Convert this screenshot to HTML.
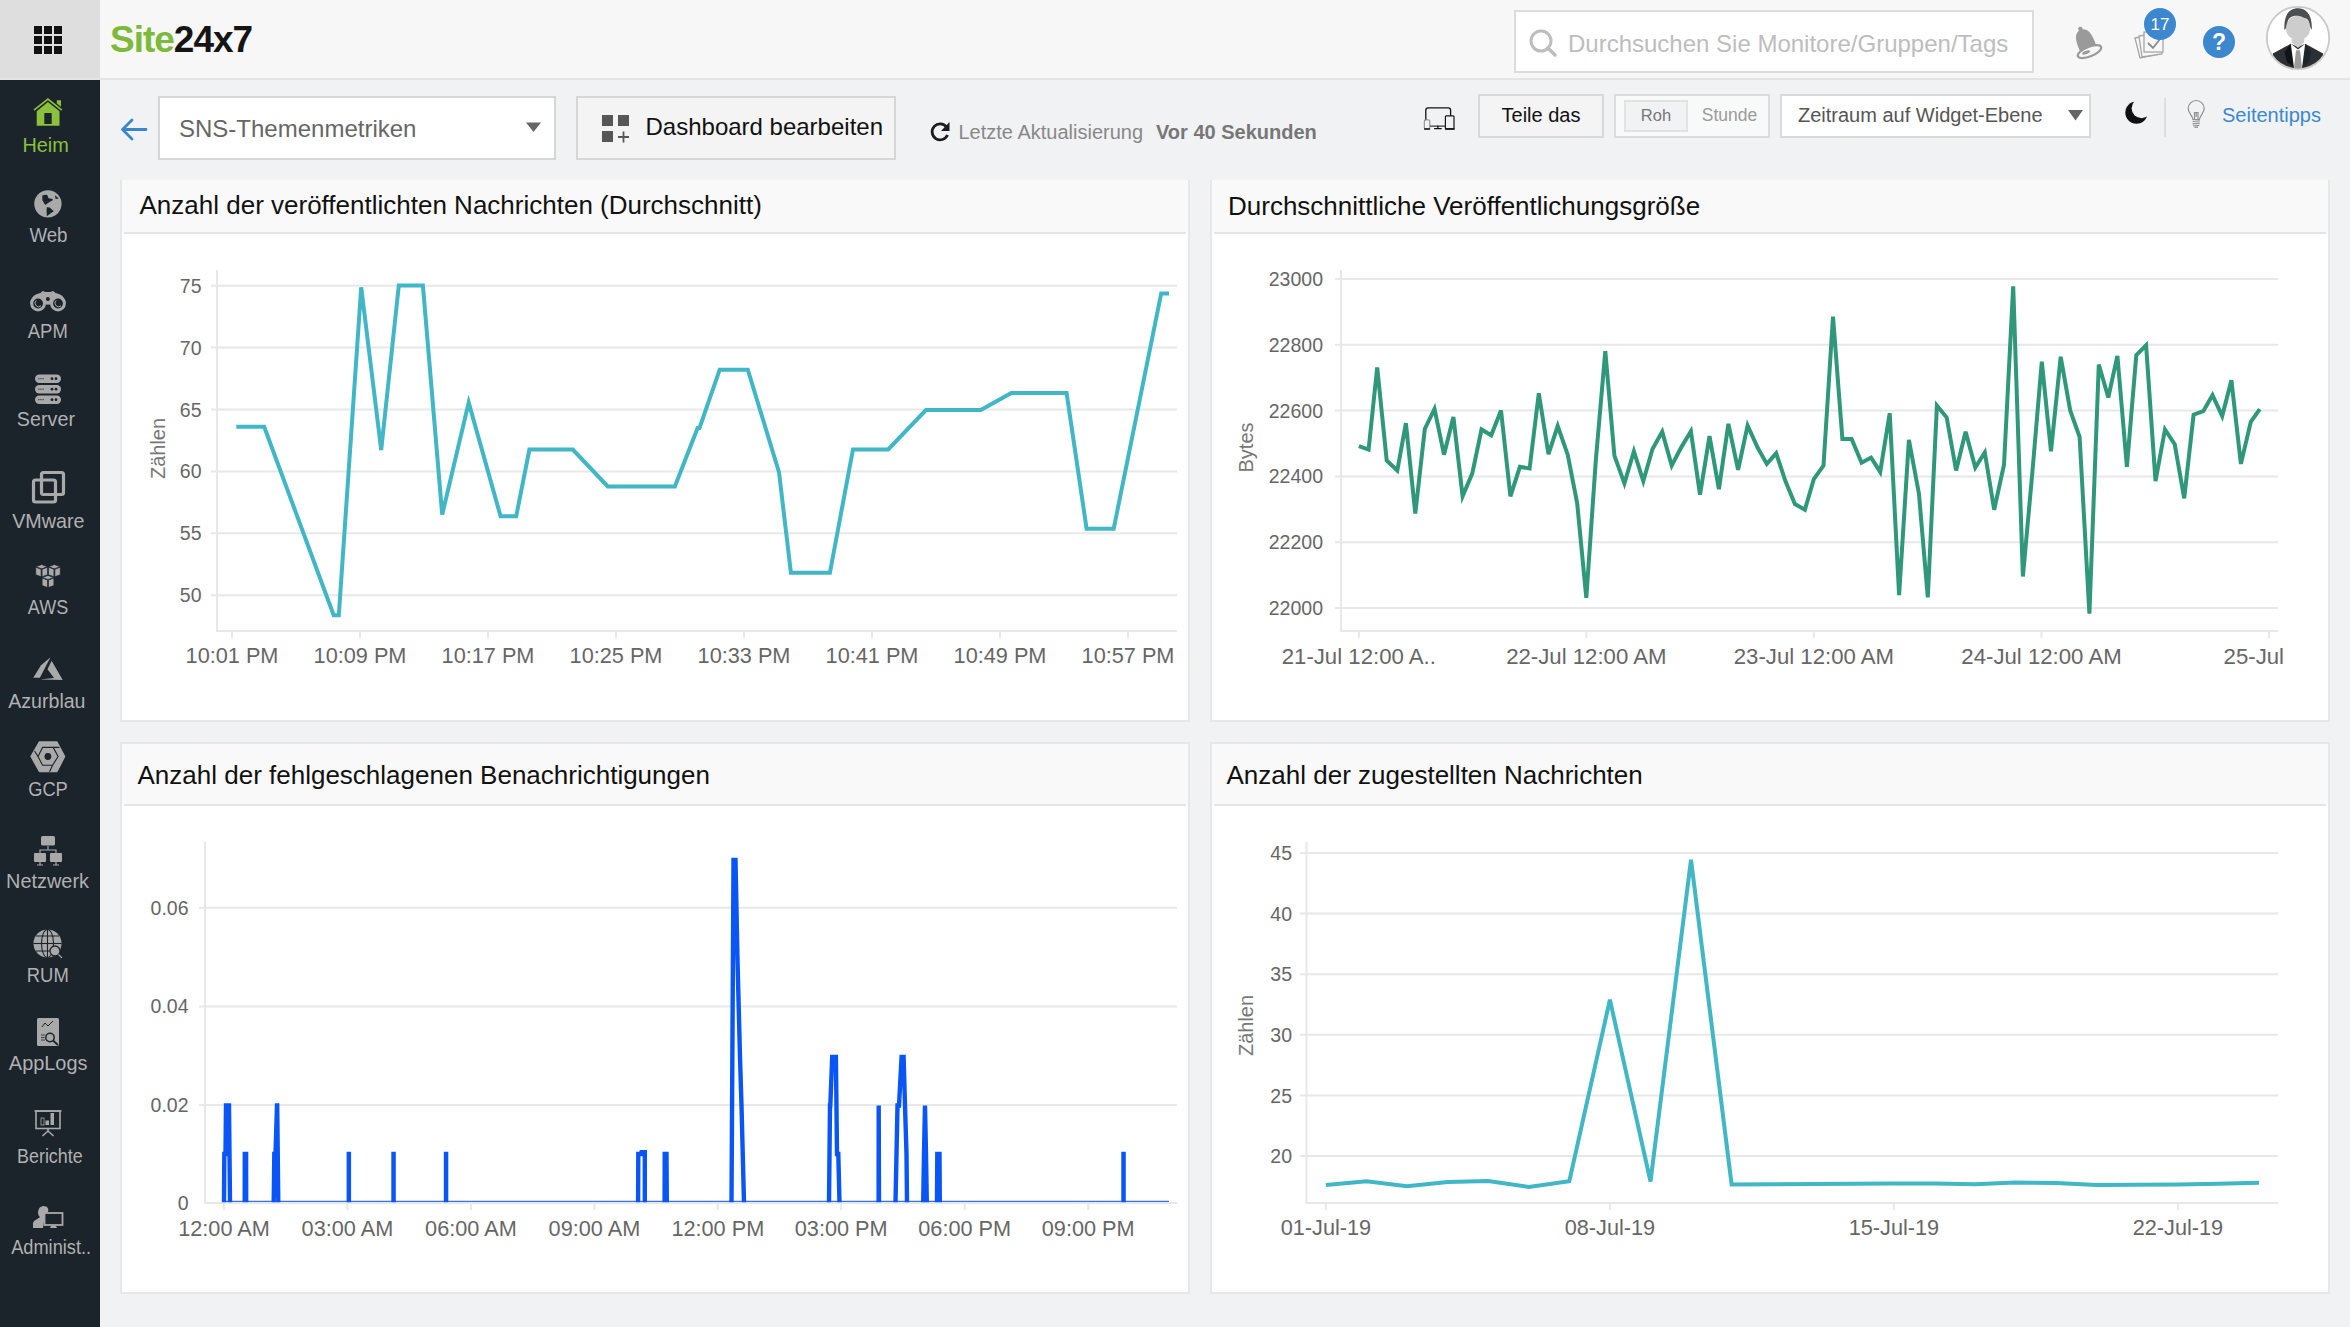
<!DOCTYPE html>
<html><head><meta charset="utf-8"><title>Site24x7 - SNS-Themenmetriken</title>
<style>
html,body{margin:0;padding:0;}
body{width:2350px;height:1327px;position:relative;overflow:hidden;background:#f1f2f4;font-family:'Liberation Sans', sans-serif;}
svg text{font-family:'Liberation Sans', sans-serif;}
</style></head><body>
<div style="position:absolute;left:0px;top:0px;width:2350px;height:78px;box-sizing:border-box;background:#f7f7f7"></div><div style="position:absolute;left:0px;top:78px;width:2350px;height:2px;box-sizing:border-box;background:#e4e4e4"></div><div style="position:absolute;left:0px;top:0px;width:100px;height:78px;box-sizing:border-box;background:#dedede"></div><div style="position:absolute;left:0px;top:80px;width:100px;height:1247px;box-sizing:border-box;background:#1b232b"></div><div style="position:absolute;left:1514px;top:10px;width:520px;height:63px;box-sizing:border-box;background:#fff;border:2px solid #dcdcdc"></div><div style="position:absolute;left:158px;top:96px;width:398px;height:64px;box-sizing:border-box;background:#fff;border:2px solid #d6d6d6"></div><div style="position:absolute;left:576px;top:96px;width:320px;height:64px;box-sizing:border-box;background:#f4f4f4;border:2px solid #d6d6d6"></div><div style="position:absolute;left:1478px;top:94px;width:126px;height:44px;box-sizing:border-box;background:#f4f4f4;border:2px solid #d9d9d9"></div><div style="position:absolute;left:1614px;top:94px;width:156px;height:44px;box-sizing:border-box;background:#f8f9f9;border:2px solid #dcdcdc"></div><div style="position:absolute;left:1624px;top:100px;width:64px;height:32px;box-sizing:border-box;background:#f1f2f4;border:2px solid #e2e2e2"></div><div style="position:absolute;left:1780px;top:94px;width:311px;height:44px;box-sizing:border-box;background:#fff;border:2px solid #d9d9d9"></div><div style="position:absolute;left:2164px;top:98px;width:2px;height:39px;box-sizing:border-box;background:#dedede"></div><div style="position:absolute;left:120px;top:180px;width:1070px;height:542px;box-sizing:border-box;background:#fff;border:2px solid #e7e7e7;border-top-width:0"></div><div style="position:absolute;left:1210px;top:180px;width:1120px;height:542px;box-sizing:border-box;background:#fff;border:2px solid #e7e7e7;border-top-width:0"></div><div style="position:absolute;left:120px;top:742px;width:1070px;height:552px;box-sizing:border-box;background:#fff;border:2px solid #e7e7e7;border-top-width:2px"></div><div style="position:absolute;left:1210px;top:742px;width:1120px;height:552px;box-sizing:border-box;background:#fff;border:2px solid #e7e7e7;border-top-width:2px"></div><div style="position:absolute;left:122px;top:180px;width:1066px;height:52px;box-sizing:border-box;background:#f9f9f9"></div><div style="position:absolute;left:124px;top:232px;width:1062px;height:2px;box-sizing:border-box;background:#e5e5e5"></div><div style="position:absolute;left:1212px;top:180px;width:1116px;height:52px;box-sizing:border-box;background:#f9f9f9"></div><div style="position:absolute;left:1214px;top:232px;width:1112px;height:2px;box-sizing:border-box;background:#e5e5e5"></div><div style="position:absolute;left:122px;top:744px;width:1066px;height:60px;box-sizing:border-box;background:#f9f9f9"></div><div style="position:absolute;left:124px;top:804px;width:1062px;height:2px;box-sizing:border-box;background:#e5e5e5"></div><div style="position:absolute;left:1212px;top:744px;width:1116px;height:60px;box-sizing:border-box;background:#f9f9f9"></div><div style="position:absolute;left:1214px;top:804px;width:1112px;height:2px;box-sizing:border-box;background:#e5e5e5"></div>
<svg width="2350" height="1327" viewBox="0 0 2350 1327" style="position:absolute;left:0;top:0">
<rect x="34" y="26" width="8" height="8" fill="#111"/><rect x="34" y="36" width="8" height="8" fill="#111"/><rect x="34" y="46" width="8" height="8" fill="#111"/><rect x="44" y="26" width="8" height="8" fill="#111"/><rect x="44" y="36" width="8" height="8" fill="#111"/><rect x="44" y="46" width="8" height="8" fill="#111"/><rect x="54" y="26" width="8" height="8" fill="#111"/><rect x="54" y="36" width="8" height="8" fill="#111"/><rect x="54" y="46" width="8" height="8" fill="#111"/><text x="110" y="52" font-size="37" font-weight="700" letter-spacing="-1" fill="#7dba3c">Site<tspan fill="#151515">24x7</tspan></text><circle cx="1541" cy="41" r="10" fill="none" stroke="#bdbdbd" stroke-width="3"/><line x1="1548" y1="48" x2="1555" y2="55" stroke="#bdbdbd" stroke-width="3.5" stroke-linecap="round"/><text x="1568.0" y="52.0" font-size="24" fill="#bdbdbd" text-anchor="start" font-weight="400" >Durchsuchen Sie Monitore/Gruppen/Tags</text><g transform="translate(2085,40.5) rotate(-22)"><circle cx="0" cy="-12.5" r="2.2" fill="#9a9a9a"/><path d="M-8.5,10 C-9,0 -9,-11 0,-11.5 C9,-11 9,0 8.5,10 L12,12 L-12,12 Z" fill="#9a9a9a"/><ellipse cx="0" cy="12" rx="12.5" ry="4.8" fill="#f7f7f7" stroke="#9a9a9a" stroke-width="2.2"/><ellipse cx="-3.5" cy="11.5" rx="4.2" ry="1.6" fill="#9a9a9a"/></g><g fill="none" stroke="#a6a6a6" stroke-width="1.3"><path d="M2135,38 L2156,34 L2160,54 L2140,58 Z" fill="#f7f7f7"/><path d="M2139,36 L2159,33 L2162,54 L2142,57 Z" fill="#f7f7f7"/><rect x="2144" y="32" width="19" height="20" fill="#f7f7f7"/><path d="M2148,43 L2153,48 L2160,39" stroke="#8a8a8a" stroke-width="1.8"/></g><circle cx="2160" cy="24" r="16" fill="#3d87cf"/><text x="2160.0" y="30.0" font-size="17" fill="#fff" text-anchor="middle" font-weight="400" >17</text><circle cx="2219" cy="42" r="16" fill="#3d87cf"/><text x="2219.0" y="50.0" font-size="23" fill="#fff" text-anchor="middle" font-weight="700" >?</text><circle cx="2298" cy="38" r="31.2" fill="#fff" stroke="#c9c9c9" stroke-width="1.8"/><clipPath id="av"><circle cx="2298" cy="38" r="30.3"/></clipPath><g clip-path="url(#av)"><path d="M2270,75 L2272.9,53.5 L2290.8,43.8 L2298,47 L2305.2,43.8 L2323.1,53.5 L2326,75 Z" fill="#2c3034"/><path d="M2290.8,43.8 L2294.5,68 L2287,62 L2284.5,52 Z" fill="#111314"/><path d="M2305.2,43.8 L2301.5,68 L2309,62 L2311.5,52 Z" fill="#1e252c"/><path d="M2290.8,43.8 L2298,49.5 L2305.2,43.8 L2302,68 L2294,68 Z" fill="#fff"/><path d="M2296,50.2 L2300,50.2 L2302,68 L2294,68 Z" fill="#9b9b9b"/><path d="M2291.5,39 L2304.5,39 L2304,42.5 L2298,48 L2292,42.5 Z" fill="#cdcdcd"/><ellipse cx="2298.1" cy="28" rx="12.2" ry="12.3" fill="#cdcdcd"/><path d="M2284.4,30 C2283.5,14 2290,8.2 2298,8.2 C2306,8.2 2312.5,14 2311.8,30 L2310.3,27 C2309.5,21 2307.5,18.5 2305.5,18.2 C2302.5,17.3 2300,15.8 2297.5,15.8 C2292,15.8 2289,17.5 2287.6,21.5 C2286.6,24 2286,27 2285.8,28.5 Z" fill="#4b4e53"/></g><g transform="matrix(0.9956,0,0,1,-2.18,0)"><text x="48.0" y="152.2" font-size="20" fill="#8bc13c" text-anchor="middle" font-weight="400" >Heim</text></g><g transform="matrix(0.9366,0,0,1,3.51,0)"><text x="48.0" y="241.8" font-size="20" fill="#b1b1b1" text-anchor="middle" font-weight="400" >Web</text></g><g transform="matrix(0.9233,0,0,1,3.50,0)"><text x="48.0" y="338.1" font-size="20" fill="#b1b1b1" text-anchor="middle" font-weight="400" >APM</text></g><g transform="matrix(0.9864,0,0,1,-1.44,0)"><text x="48.0" y="426.5" font-size="20" fill="#b1b1b1" text-anchor="middle" font-weight="400" >Server</text></g><g transform="matrix(0.9877,0,0,1,0.94,0)"><text x="48.0" y="527.7" font-size="20" fill="#b1b1b1" text-anchor="middle" font-weight="400" >VMware</text></g><g transform="matrix(0.9022,0,0,1,4.74,0)"><text x="48.0" y="613.8" font-size="20" fill="#b1b1b1" text-anchor="middle" font-weight="400" >AWS</text></g><g transform="matrix(0.9797,0,0,1,-0.14,0)"><text x="48.0" y="708.5" font-size="20" fill="#b1b1b1" text-anchor="middle" font-weight="400" >Azurblau</text></g><g transform="matrix(0.9143,0,0,1,4.11,0)"><text x="48.0" y="795.6" font-size="20" fill="#b1b1b1" text-anchor="middle" font-weight="400" >GCP</text></g><g transform="matrix(0.9964,0,0,1,-0.27,0)"><text x="48.0" y="888.1" font-size="20" fill="#b1b1b1" text-anchor="middle" font-weight="400" >Netzwerk</text></g><g transform="matrix(0.9227,0,0,1,3.51,0)"><text x="48.0" y="981.6" font-size="20" fill="#b1b1b1" text-anchor="middle" font-weight="400" >RUM</text></g><g transform="matrix(0.9962,0,0,1,0.33,0)"><text x="48.0" y="1070.4" font-size="20" fill="#b1b1b1" text-anchor="middle" font-weight="400" >AppLogs</text></g><g transform="matrix(0.8931,0,0,1,6.98,0)"><text x="48.0" y="1163.3" font-size="20" fill="#b1b1b1" text-anchor="middle" font-weight="400" >Berichte</text></g><g transform="matrix(0.9105,0,0,1,7.45,0)"><text x="48.0" y="1253.6" font-size="20" fill="#b1b1b1" text-anchor="middle" font-weight="400" >Administ..</text></g><g fill="#8bc13c"><path d="M34,110.1 L47.9,99.2 L61.8,110.1" fill="none" stroke="#8bc13c" stroke-width="1.7"/><path d="M56.8,100.3 L61,100.3 L61,106.8 L56.8,103.6 Z"/><path d="M36.7,111.3 L47.9,102 L59.5,111.3 L59.5,125.8 L36.7,125.8 Z"/><rect x="44.3" y="113.1" width="7.4" height="11" rx="0.6" fill="#1b232b"/></g><circle cx="47.9" cy="203.85" r="13.7" fill="#a9a9a9"/><path d="M42.3,195.6 C44,194.8 46,194.6 47.2,195 L48.6,198.2 L52.4,199 L53,200.1 L49.2,202.3 L47.2,203.4 L45.6,205 L44.3,203.4 L42.4,200.3 Z" fill="#1b232b"/><path d="M55,195.2 L58.7,198.6 L55.6,199 Z" fill="#1b232b"/><path d="M46.8,207.3 L49.7,207.4 L53.8,211.2 L51.1,213.1 L46.8,216.3 L46.6,210.6 Z" fill="#1b232b"/><g fill="#a9a9a9"><circle cx="38.05" cy="303.5" r="7.9"/><circle cx="58" cy="303.5" r="7.9"/><path d="M30.4,303 C30.5,297.5 35,293.8 40.5,293 L42.5,290.9 L45.5,292 L50.3,292 L53.3,290.9 L55.5,293 C61,293.8 65.5,297.5 65.6,303 Z"/><rect x="44" y="292" width="8" height="12.6"/></g><circle cx="38.05" cy="303.5" r="4.9" fill="#1b232b"/><circle cx="58" cy="303.5" r="4.9" fill="#1b232b"/><circle cx="47.9" cy="299.1" r="2" fill="#1b232b"/><path d="M36.2,300.6 A3.3,3.3 0 0 0 41,305.8" stroke="#a9a9a9" stroke-width="1" fill="none"/><path d="M56.15,300.6 A3.3,3.3 0 0 0 60.95,305.8" stroke="#a9a9a9" stroke-width="1" fill="none"/><rect x="35" y="374.5" width="26" height="8.5" rx="4.2" fill="#a9a9a9"/><circle cx="52" cy="378.7" r="1.4" fill="#1b232b"/><circle cx="56" cy="378.7" r="1.4" fill="#1b232b"/><line x1="38" y1="378.7" x2="44" y2="378.7" stroke="#1b232b" stroke-width="0.8" stroke-dasharray="1.5,0.7"/><rect x="35" y="385.0" width="26" height="8.5" rx="4.2" fill="#a9a9a9"/><circle cx="52" cy="389.2" r="1.4" fill="#1b232b"/><circle cx="56" cy="389.2" r="1.4" fill="#1b232b"/><line x1="38" y1="389.2" x2="44" y2="389.2" stroke="#1b232b" stroke-width="0.8" stroke-dasharray="1.5,0.7"/><rect x="35" y="395.5" width="26" height="8.5" rx="4.2" fill="#a9a9a9"/><circle cx="52" cy="399.7" r="1.4" fill="#1b232b"/><circle cx="56" cy="399.7" r="1.4" fill="#1b232b"/><line x1="38" y1="399.7" x2="44" y2="399.7" stroke="#1b232b" stroke-width="0.8" stroke-dasharray="1.5,0.7"/><g fill="none" stroke="#a9a9a9" stroke-width="3.2"><rect x="41.5" y="472.5" width="22" height="22" rx="2"/><rect x="33.5" y="480" width="22" height="22" rx="2"/></g><g stroke="#1b232b" stroke-width="0.7" stroke-linejoin="round"><path d="M35.7,566.7 L41.6,564.6 L47.5,566.7 L41.6,568.8000000000001 Z" fill="#a9a9a9"/><path d="M35.7,567.2 L41.15,569.3000000000001 L41.15,576.8000000000001 L35.7,574.7 Z" fill="#a9a9a9"/><path d="M47.5,567.2 L42.050000000000004,569.3000000000001 L42.050000000000004,576.8000000000001 L47.5,574.7 Z" fill="#a9a9a9"/></g><g stroke="#1b232b" stroke-width="0.7" stroke-linejoin="round"><path d="M48.5,566.7 L54.4,564.6 L60.3,566.7 L54.4,568.8000000000001 Z" fill="#a9a9a9"/><path d="M48.5,567.2 L53.949999999999996,569.3000000000001 L53.949999999999996,576.8000000000001 L48.5,574.7 Z" fill="#a9a9a9"/><path d="M60.3,567.2 L54.85,569.3000000000001 L54.85,576.8000000000001 L60.3,574.7 Z" fill="#a9a9a9"/></g><g stroke="#1b232b" stroke-width="0.7" stroke-linejoin="round"><path d="M42.1,577.5 L48,575.4 L53.9,577.5 L48,579.6 Z" fill="#a9a9a9"/><path d="M42.1,578.0 L47.55,580.1 L47.55,587.6 L42.1,585.5 Z" fill="#a9a9a9"/><path d="M53.9,578.0 L48.45,580.1 L48.45,587.6 L53.9,585.5 Z" fill="#a9a9a9"/></g><path d="M50.5,657.2 L41,665.2 L33.3,677.7 L39.9,677.7 Z" fill="#a9a9a9"/><path d="M51.6,660.7 L62.7,679.9 L41.3,679.6 L41.3,679.2 L54,678 L47.5,669.3 Z" fill="#a9a9a9"/><path d="M39.5,742 L56.9,742 L64.6,756.5 L56.9,771.5 L39.5,771.5 L31.1,756.5 Z" fill="#a9a9a9" stroke="#a9a9a9" stroke-width="1.5" stroke-linejoin="round"/><path d="M42.6,747.4 L53.2,747.4 L58.1,756.5 L52.6,765.2 L42.6,765.2 L38,756.5 Z" fill="#a9a9a9" stroke="#1b232b" stroke-width="1.1"/><circle cx="47.9" cy="756.5" r="3.4" fill="#1b232b"/><path d="M34.5,751 L38,756.5 M53.2,747.4 L59.5,747.4 M52.6,765.2 L49.5,771.8" stroke="#1b232b" stroke-width="1.1" fill="none"/><g fill="#a9a9a9"><rect x="41" y="836" width="14" height="9.5" rx="1.5"/><rect x="34" y="853" width="12" height="9" rx="1"/><rect x="50" y="853" width="12" height="9" rx="1"/></g><path d="M48,846 L48,850 M40,853 L40,850 L56,850 L56,853 M40,862 L40,865 M56,862 L56,865 M37,865 L43,865 M53,865 L59,865" stroke="#a9a9a9" stroke-width="1.2" fill="none"/><circle cx="47.5" cy="943.5" r="14" fill="#a9a9a9"/><g stroke="#1b232b" stroke-width="1.1" fill="none"><ellipse cx="47.5" cy="943.5" rx="6" ry="14"/><line x1="47.5" y1="929.5" x2="47.5" y2="957.5"/><line x1="33.5" y1="943.5" x2="61.5" y2="943.5"/><path d="M36,936 L59,936 M36,951 L59,951"/></g><circle cx="55" cy="951" r="5" fill="#a9a9a9" stroke="#1b232b" stroke-width="1.3"/><line x1="58.5" y1="954.5" x2="62" y2="958" stroke="#1b232b" stroke-width="2.4"/><line x1="58.5" y1="954.5" x2="62" y2="958" stroke="#a9a9a9" stroke-width="1.1"/><rect x="37" y="1018" width="22" height="28" rx="1.5" fill="#a9a9a9"/><path d="M42,1027 L45,1023 L48,1026 L53,1021" stroke="#1b232b" stroke-width="1" fill="none"/><circle cx="50" cy="1037.5" r="4.2" fill="none" stroke="#1b232b" stroke-width="1.5"/><line x1="53" y1="1040.5" x2="58" y2="1045" stroke="#1b232b" stroke-width="1.8"/><path d="M41,1035 L45,1035 M41,1037.5 L44.5,1037.5 M41,1040 L45,1040" stroke="#1b232b" stroke-width="0.8"/><path d="M34.5,1111 L61.5,1111" stroke="#a9a9a9" stroke-width="1.6"/><rect x="36" y="1111" width="24" height="17.5" fill="none" stroke="#a9a9a9" stroke-width="1.6"/><g fill="#a9a9a9"><rect x="41" y="1118" width="3" height="7" fill="none" stroke="#a9a9a9" stroke-width="0.8"/><rect x="45.5" y="1120.5" width="3.5" height="4.5"/><rect x="50.5" y="1113" width="3.5" height="12"/></g><path d="M48,1129 L48,1132 M42.5,1136 L48,1131 L53.5,1136" stroke="#a9a9a9" stroke-width="1.6" fill="none"/><path d="M33,1228 L33,1223 C34,1220 38,1219 40,1217 C37,1215 37,1207 43,1206 C48,1206 49,1209 48,1212 L45,1214 L43,1228 Z" fill="#a9a9a9"/><rect x="44.5" y="1213" width="18" height="12" fill="#1b232b" stroke="#a9a9a9" stroke-width="1.8"/><path d="M51,1226 L56,1226 L57,1228 L50,1228 Z" fill="#a9a9a9"/><path d="M146,129.5 L123,129.5 M132,120 L122.5,129.5 L132,139" stroke="#3b85cc" stroke-width="2.8" fill="none" stroke-linecap="round" stroke-linejoin="round"/><text x="179.0" y="137.0" font-size="24" fill="#666" text-anchor="start" font-weight="400" >SNS-Themenmetriken</text><path d="M526,122.5 L541,122.5 L533.5,132 Z" fill="#666"/><g fill="#575757"><rect x="602" y="115" width="11" height="11"/><rect x="618" y="115" width="11" height="11"/><rect x="602" y="131" width="11" height="11"/></g><path d="M623.5,131.5 L623.5,142.5 M618,137 L629,137" stroke="#575757" stroke-width="1.8"/><text x="645.5" y="134.5" font-size="24" fill="#111" text-anchor="start" font-weight="400" >Dashboard bearbeiten</text><path d="M946.5,127 A8,8 0 1 0 947.5,135" stroke="#1c1c1c" stroke-width="2.8" fill="none"/><path d="M949.5,122 L949.5,131 L941,131 Z" fill="#1c1c1c"/><text x="958.5" y="138.5" font-size="20" fill="#888" text-anchor="start" font-weight="400" >Letzte Aktualisierung</text><text x="1156.0" y="138.5" font-size="20" fill="#777" text-anchor="start" font-weight="700" >Vor 40 Sekunden</text><g fill="none" stroke-linecap="round"><path d="M1425.8,119.4 L1425.8,110.2 Q1425.8,107.8 1428.2,107.8 L1448.2,107.8 Q1450.6,107.8 1450.6,110.2 L1450.6,115.3" stroke="#111" stroke-width="1.3"/><path d="M1430.4,126.2 L1444.6,126.2" stroke="#3a3a3a" stroke-width="1.3"/><path d="M1437.9,126.2 L1437.9,128.4 M1434.6,128.7 L1441.2,128.7" stroke="#111" stroke-width="1.3"/><rect x="1424.3" y="119.9" width="5.5" height="9" rx="0.9" stroke="#777" stroke-width="0.9"/><path d="M1424.6,129 L1429.6,129" stroke="#111" stroke-width="1.3"/><rect x="1445.4" y="115.9" width="8.6" height="13" rx="0.9" stroke="#151515" stroke-width="1.2"/><path d="M1445.6,128.9 L1454.2,128.9" stroke="#111" stroke-width="1.5"/></g><text x="1541.0" y="122.3" font-size="20" fill="#111" text-anchor="middle" font-weight="400" >Teile das</text><text x="1656.0" y="121.0" font-size="16.5" fill="#777" text-anchor="middle" font-weight="400" >Roh</text><text x="1729.5" y="121.0" font-size="17.5" fill="#9b9b9b" text-anchor="middle" font-weight="400" >Stunde</text><text x="1798.0" y="122.3" font-size="20" fill="#555" text-anchor="start" font-weight="400" >Zeitraum auf Widget-Ebene</text><path d="M2068,110 L2083,110 L2075.5,120.5 Z" fill="#666"/><circle cx="2136.5" cy="112.6" r="11.2" fill="#111"/><circle cx="2141.6" cy="108.2" r="10" fill="#f1f2f4"/><g fill="none" stroke="#8f8f8f" stroke-width="1.2"><path d="M2193,119.5 C2192.5,115.5 2188.2,113 2188.2,108.5 A8,8 0 0 1 2204.2,108.5 C2204.2,113 2199.9,115.5 2199.4,119.5 Z"/><path d="M2194.5,119 L2194.5,112.5 L2198,112.5 L2198,119 M2196.2,112.5 L2196.2,117"/><path d="M2192.5,121.5 L2199.8,120.8 M2192.5,123.8 L2199.8,123.1 M2193,126 L2199.3,125.4 M2194.5,127.5 L2198,127.2"/></g><text x="2222.0" y="122.3" font-size="20" fill="#3d87cf" text-anchor="start" font-weight="400" >Seitentipps</text><text x="139.5" y="214.3" font-size="26" fill="#111" text-anchor="start" font-weight="400" >Anzahl der veröffentlichten Nachrichten (Durchschnitt)</text><text x="1228.0" y="214.5" font-size="26" fill="#111" text-anchor="start" font-weight="400" >Durchschnittliche Veröffentlichungsgröße</text><text x="137.5" y="784.0" font-size="26" fill="#111" text-anchor="start" font-weight="400" >Anzahl der fehlgeschlagenen Benachrichtigungen</text><text x="1226.5" y="784.0" font-size="26" fill="#111" text-anchor="start" font-weight="400" >Anzahl der zugestellten Nachrichten</text><line x1="211" y1="285.7" x2="1177" y2="285.7" stroke="#e8e8e8" stroke-width="2"/><line x1="211" y1="347.6" x2="1177" y2="347.6" stroke="#e8e8e8" stroke-width="2"/><line x1="211" y1="409.5" x2="1177" y2="409.5" stroke="#e8e8e8" stroke-width="2"/><line x1="211" y1="471.4" x2="1177" y2="471.4" stroke="#e8e8e8" stroke-width="2"/><line x1="211" y1="533.3" x2="1177" y2="533.3" stroke="#e8e8e8" stroke-width="2"/><line x1="211" y1="595.2" x2="1177" y2="595.2" stroke="#e8e8e8" stroke-width="2"/><line x1="217" y1="270" x2="217" y2="632" stroke="#e8e8e8" stroke-width="2"/><line x1="216" y1="631" x2="1177" y2="631" stroke="#e8e8e8" stroke-width="2"/><line x1="232.0" y1="631" x2="232.0" y2="638" stroke="#e8e8e8" stroke-width="2"/><line x1="360.0" y1="631" x2="360.0" y2="638" stroke="#e8e8e8" stroke-width="2"/><line x1="488.0" y1="631" x2="488.0" y2="638" stroke="#e8e8e8" stroke-width="2"/><line x1="616.0" y1="631" x2="616.0" y2="638" stroke="#e8e8e8" stroke-width="2"/><line x1="744.0" y1="631" x2="744.0" y2="638" stroke="#e8e8e8" stroke-width="2"/><line x1="872.0" y1="631" x2="872.0" y2="638" stroke="#e8e8e8" stroke-width="2"/><line x1="1000.0" y1="631" x2="1000.0" y2="638" stroke="#e8e8e8" stroke-width="2"/><line x1="1128.0" y1="631" x2="1128.0" y2="638" stroke="#e8e8e8" stroke-width="2"/><text x="201.5" y="292.7" font-size="19.5" fill="#666" text-anchor="end" font-weight="400" >75</text><text x="201.5" y="354.6" font-size="19.5" fill="#666" text-anchor="end" font-weight="400" >70</text><text x="201.5" y="416.5" font-size="19.5" fill="#666" text-anchor="end" font-weight="400" >65</text><text x="201.5" y="478.4" font-size="19.5" fill="#666" text-anchor="end" font-weight="400" >60</text><text x="201.5" y="540.3" font-size="19.5" fill="#666" text-anchor="end" font-weight="400" >55</text><text x="201.5" y="602.2" font-size="19.5" fill="#666" text-anchor="end" font-weight="400" >50</text><text x="232.0" y="663.0" font-size="21.7" fill="#666" text-anchor="middle" font-weight="400" >10:01 PM</text><text x="360.0" y="663.0" font-size="21.7" fill="#666" text-anchor="middle" font-weight="400" >10:09 PM</text><text x="488.0" y="663.0" font-size="21.7" fill="#666" text-anchor="middle" font-weight="400" >10:17 PM</text><text x="616.0" y="663.0" font-size="21.7" fill="#666" text-anchor="middle" font-weight="400" >10:25 PM</text><text x="744.0" y="663.0" font-size="21.7" fill="#666" text-anchor="middle" font-weight="400" >10:33 PM</text><text x="872.0" y="663.0" font-size="21.7" fill="#666" text-anchor="middle" font-weight="400" >10:41 PM</text><text x="1000.0" y="663.0" font-size="21.7" fill="#666" text-anchor="middle" font-weight="400" >10:49 PM</text><text x="1128.0" y="663.0" font-size="21.7" fill="#666" text-anchor="middle" font-weight="400" >10:57 PM</text><text transform="translate(165,448.5) rotate(-90)" font-size="20" fill="#777" text-anchor="middle">Zählen</text><polyline points="236.3,426.7 264.2,426.7 333.7,615.3 338.8,615.3 361.2,287.3 381.2,450.1 398.8,285.6 422.9,285.6 442.2,514.6 468.7,402.6 500.6,516.3 516.2,516.3 529.4,449.5 572.8,449.5 607.8,486.4 674.9,486.4 697.6,428.0 699.5,428.0 719.7,369.7 747.8,369.7 779.0,472.1 790.9,572.8 829.9,572.8 853.0,449.4 888.2,449.4 925.9,410.0 980.8,410.0 1011.3,393.1 1066.6,393.1 1086.6,528.7 1113.7,528.7 1161.2,293.4 1169.0,293.4" fill="none" stroke="#41b6c5" stroke-width="4" stroke-linejoin="miter"/><line x1="1335" y1="279.0" x2="2278" y2="279.0" stroke="#e8e8e8" stroke-width="2"/><line x1="1335" y1="344.8" x2="2278" y2="344.8" stroke="#e8e8e8" stroke-width="2"/><line x1="1335" y1="410.6" x2="2278" y2="410.6" stroke="#e8e8e8" stroke-width="2"/><line x1="1335" y1="476.4" x2="2278" y2="476.4" stroke="#e8e8e8" stroke-width="2"/><line x1="1335" y1="542.2" x2="2278" y2="542.2" stroke="#e8e8e8" stroke-width="2"/><line x1="1335" y1="608.0" x2="2278" y2="608.0" stroke="#e8e8e8" stroke-width="2"/><line x1="1341" y1="270" x2="1341" y2="632" stroke="#e8e8e8" stroke-width="2"/><line x1="1340" y1="631" x2="2278" y2="631" stroke="#e8e8e8" stroke-width="2"/><line x1="1358.8" y1="631" x2="1358.8" y2="638" stroke="#e8e8e8" stroke-width="2"/><line x1="1586.3" y1="631" x2="1586.3" y2="638" stroke="#e8e8e8" stroke-width="2"/><line x1="1813.9" y1="631" x2="1813.9" y2="638" stroke="#e8e8e8" stroke-width="2"/><line x1="2041.5" y1="631" x2="2041.5" y2="638" stroke="#e8e8e8" stroke-width="2"/><line x1="2269.0" y1="631" x2="2269.0" y2="638" stroke="#e8e8e8" stroke-width="2"/><text x="1323.0" y="286.0" font-size="19.5" fill="#666" text-anchor="end" font-weight="400" >23000</text><text x="1323.0" y="351.8" font-size="19.5" fill="#666" text-anchor="end" font-weight="400" >22800</text><text x="1323.0" y="417.6" font-size="19.5" fill="#666" text-anchor="end" font-weight="400" >22600</text><text x="1323.0" y="483.4" font-size="19.5" fill="#666" text-anchor="end" font-weight="400" >22400</text><text x="1323.0" y="549.2" font-size="19.5" fill="#666" text-anchor="end" font-weight="400" >22200</text><text x="1323.0" y="615.0" font-size="19.5" fill="#666" text-anchor="end" font-weight="400" >22000</text><text x="1358.8" y="663.8" font-size="22.2" fill="#666" text-anchor="middle" font-weight="400" >21-Jul 12:00 A..</text><text x="1586.3" y="663.8" font-size="22.2" fill="#666" text-anchor="middle" font-weight="400" >22-Jul 12:00 AM</text><text x="1813.9" y="663.8" font-size="22.2" fill="#666" text-anchor="middle" font-weight="400" >23-Jul 12:00 AM</text><text x="2041.5" y="663.8" font-size="22.2" fill="#666" text-anchor="middle" font-weight="400" >24-Jul 12:00 AM</text><text x="2269.0" y="663.8" font-size="22.2" fill="#666" text-anchor="middle" font-weight="400" ></text><text x="2284.0" y="663.8" font-size="22.2" fill="#666" text-anchor="end" font-weight="400" >25-Jul</text><text transform="translate(1253,447.5) rotate(-90)" font-size="20" fill="#777" text-anchor="middle">Bytes</text><polyline points="1358.9,446.2 1368.6,449.6 1377.2,367.4 1386.7,460.5 1397.3,470.5 1405.9,423.2 1415.3,513.5 1424.8,429.0 1434.5,408.9 1444.0,454.7 1453.4,416.9 1462.6,496.3 1472.3,473.4 1481.5,429.5 1491.2,435.3 1501.0,410.4 1510.4,496.3 1519.9,466.8 1529.6,468.5 1538.8,393.2 1548.5,454.2 1557.7,426.1 1567.7,454.7 1577.2,503.4 1586.3,597.9 1595.8,460.5 1605.3,351.1 1614.4,455.6 1624.4,483.4 1633.9,451.3 1643.3,481.1 1652.5,449.0 1662.2,431.8 1671.7,465.6 1681.1,447.6 1690.9,431.3 1700.0,494.8 1709.5,436.1 1718.9,489.1 1728.4,423.8 1738.1,469.9 1747.6,425.5 1757.6,447.6 1766.8,463.9 1776.2,453.3 1785.4,481.1 1794.9,504.0 1804.9,509.7 1813.8,479.1 1823.5,465.6 1833.0,316.7 1842.4,439.0 1851.6,439.0 1861.6,462.8 1871.1,457.6 1880.2,471.9 1889.7,413.2 1899.1,595.1 1908.9,439.9 1918.9,493.4 1927.8,597.4 1936.9,405.5 1946.7,417.5 1956.1,470.5 1965.6,431.8 1975.3,467.6 1984.8,452.5 1994.2,509.7 2004.0,464.8 2013.2,286.3 2022.9,576.5 2032.4,471.9 2041.8,361.7 2051.0,451.3 2060.7,356.8 2070.2,410.4 2079.6,437.0 2089.4,613.7 2098.8,364.5 2108.3,397.5 2117.4,355.9 2126.9,466.8 2136.3,355.1 2146.1,345.3 2155.5,481.1 2165.0,429.5 2174.7,444.2 2184.2,498.3 2193.6,414.7 2203.3,411.2 2212.5,395.2 2222.2,416.1 2231.4,380.3 2240.9,463.9 2250.8,421.8 2259.8,409.2" fill="none" stroke="#2f977a" stroke-width="4" stroke-linejoin="miter"/><line x1="199" y1="907.8" x2="1177" y2="907.8" stroke="#e8e8e8" stroke-width="2"/><line x1="199" y1="1006.4" x2="1177" y2="1006.4" stroke="#e8e8e8" stroke-width="2"/><line x1="199" y1="1105.0" x2="1177" y2="1105.0" stroke="#e8e8e8" stroke-width="2"/><line x1="205" y1="842" x2="205" y2="1204" stroke="#e8e8e8" stroke-width="2"/><line x1="204" y1="1203" x2="1177" y2="1203" stroke="#e8e8e8" stroke-width="2"/><line x1="224.0" y1="1203" x2="224.0" y2="1210" stroke="#e8e8e8" stroke-width="2"/><line x1="347.4" y1="1203" x2="347.4" y2="1210" stroke="#e8e8e8" stroke-width="2"/><line x1="470.9" y1="1203" x2="470.9" y2="1210" stroke="#e8e8e8" stroke-width="2"/><line x1="594.4" y1="1203" x2="594.4" y2="1210" stroke="#e8e8e8" stroke-width="2"/><line x1="717.8" y1="1203" x2="717.8" y2="1210" stroke="#e8e8e8" stroke-width="2"/><line x1="841.2" y1="1203" x2="841.2" y2="1210" stroke="#e8e8e8" stroke-width="2"/><line x1="964.7" y1="1203" x2="964.7" y2="1210" stroke="#e8e8e8" stroke-width="2"/><line x1="1088.2" y1="1203" x2="1088.2" y2="1210" stroke="#e8e8e8" stroke-width="2"/><text x="188.5" y="914.8" font-size="19.5" fill="#666" text-anchor="end" font-weight="400" >0.06</text><text x="188.5" y="1013.4" font-size="19.5" fill="#666" text-anchor="end" font-weight="400" >0.04</text><text x="188.5" y="1112.0" font-size="19.5" fill="#666" text-anchor="end" font-weight="400" >0.02</text><text x="224.0" y="1235.5" font-size="21.7" fill="#666" text-anchor="middle" font-weight="400" >12:00 AM</text><text x="347.4" y="1235.5" font-size="21.7" fill="#666" text-anchor="middle" font-weight="400" >03:00 AM</text><text x="470.9" y="1235.5" font-size="21.7" fill="#666" text-anchor="middle" font-weight="400" >06:00 AM</text><text x="594.4" y="1235.5" font-size="21.7" fill="#666" text-anchor="middle" font-weight="400" >09:00 AM</text><text x="717.8" y="1235.5" font-size="21.7" fill="#666" text-anchor="middle" font-weight="400" >12:00 PM</text><text x="841.2" y="1235.5" font-size="21.7" fill="#666" text-anchor="middle" font-weight="400" >03:00 PM</text><text x="964.7" y="1235.5" font-size="21.7" fill="#666" text-anchor="middle" font-weight="400" >06:00 PM</text><text x="1088.2" y="1235.5" font-size="21.7" fill="#666" text-anchor="middle" font-weight="400" >09:00 PM</text><text x="188.5" y="1209.5" font-size="19.5" fill="#666" text-anchor="end" font-weight="400" >0</text><clipPath id="c3clip"><rect x="206" y="830" width="980" height="372.5"/></clipPath><g clip-path="url(#c3clip)"><line x1="222" y1="1201.4" x2="1169" y2="1201.4" stroke="#3a72f6" stroke-width="1.3"/><polyline points="224.0,1202.5 224.3,1154.0 225.5,1154.0 226.0,1105.5 229.0,1105.5 230.0,1202.5" fill="none" stroke="#0a55f5" stroke-width="4.4" stroke-linejoin="miter"/><polyline points="244.7,1202.5 244.8,1154.0 246.1,1154.0 246.2,1202.5" fill="none" stroke="#0a55f5" stroke-width="4.4" stroke-linejoin="miter"/><polyline points="273.7,1202.5 274.3,1154.0 275.5,1154.0 277.0,1105.5 277.2,1105.5 278.3,1202.5" fill="none" stroke="#0a55f5" stroke-width="4.4" stroke-linejoin="miter"/><polyline points="348.8,1202.5 348.8,1154.0 348.9,1154.0 348.9,1202.5" fill="none" stroke="#0a55f5" stroke-width="4.4" stroke-linejoin="miter"/><polyline points="393.5,1202.5 393.5,1154.0 393.6,1154.0 393.6,1202.5" fill="none" stroke="#0a55f5" stroke-width="4.4" stroke-linejoin="miter"/><polyline points="446.0,1202.5 446.0,1154.0 446.1,1154.0 446.1,1202.5" fill="none" stroke="#0a55f5" stroke-width="4.4" stroke-linejoin="miter"/><polyline points="638.1,1202.5 638.3,1154.0 641.0,1154.0 641.5,1152.1 644.8,1152.1 644.8,1202.5" fill="none" stroke="#0a55f5" stroke-width="4.4" stroke-linejoin="miter"/><polyline points="664.6,1202.5 664.7,1154.0 666.5,1154.0 666.8,1202.5" fill="none" stroke="#0a55f5" stroke-width="4.4" stroke-linejoin="miter"/><polyline points="731.5,1202.5 733.5,860.0 735.5,860.0 737.5,960.0 740.0,1057.0 741.5,1105.5 744.0,1202.5" fill="none" stroke="#0a55f5" stroke-width="4.4" stroke-linejoin="miter"/><polyline points="829.0,1202.5 830.0,1105.5 830.3,1105.5 832.2,1057.0 835.9,1057.0 837.0,1154.0 838.3,1154.0 839.5,1202.5" fill="none" stroke="#0a55f5" stroke-width="4.4" stroke-linejoin="miter"/><polyline points="878.6,1202.5 878.7,1105.5 879.0,1202.5" fill="none" stroke="#0a55f5" stroke-width="4.4" stroke-linejoin="miter"/><polyline points="895.5,1202.5 896.5,1154.0 897.5,1105.5 899.0,1105.5 901.6,1057.0 903.6,1057.0 905.0,1105.5 906.5,1154.0 907.0,1202.5" fill="none" stroke="#0a55f5" stroke-width="4.4" stroke-linejoin="miter"/><polyline points="923.2,1202.5 924.0,1154.0 925.0,1105.5 926.0,1154.0 926.8,1202.5" fill="none" stroke="#0a55f5" stroke-width="4.4" stroke-linejoin="miter"/><polyline points="937.0,1202.5 937.3,1154.0 939.5,1154.0 939.8,1202.5" fill="none" stroke="#0a55f5" stroke-width="4.4" stroke-linejoin="miter"/><polyline points="1123.5,1202.5 1123.5,1154.0 1123.6,1154.0 1123.6,1202.5" fill="none" stroke="#0a55f5" stroke-width="4.4" stroke-linejoin="miter"/></g><line x1="1300" y1="852.9" x2="2278" y2="852.9" stroke="#e8e8e8" stroke-width="2"/><line x1="1300" y1="913.5" x2="2278" y2="913.5" stroke="#e8e8e8" stroke-width="2"/><line x1="1300" y1="974.2" x2="2278" y2="974.2" stroke="#e8e8e8" stroke-width="2"/><line x1="1300" y1="1034.8" x2="2278" y2="1034.8" stroke="#e8e8e8" stroke-width="2"/><line x1="1300" y1="1095.5" x2="2278" y2="1095.5" stroke="#e8e8e8" stroke-width="2"/><line x1="1300" y1="1156.1" x2="2278" y2="1156.1" stroke="#e8e8e8" stroke-width="2"/><line x1="1306.5" y1="842" x2="1306.5" y2="1204" stroke="#e8e8e8" stroke-width="2"/><line x1="1305.5" y1="1203" x2="2278" y2="1203" stroke="#e8e8e8" stroke-width="2"/><line x1="1325.9" y1="1203" x2="1325.9" y2="1210" stroke="#e8e8e8" stroke-width="2"/><line x1="1609.9" y1="1203" x2="1609.9" y2="1210" stroke="#e8e8e8" stroke-width="2"/><line x1="1893.9" y1="1203" x2="1893.9" y2="1210" stroke="#e8e8e8" stroke-width="2"/><line x1="2177.9" y1="1203" x2="2177.9" y2="1210" stroke="#e8e8e8" stroke-width="2"/><text x="1292.0" y="859.9" font-size="19.5" fill="#666" text-anchor="end" font-weight="400" >45</text><text x="1292.0" y="920.5" font-size="19.5" fill="#666" text-anchor="end" font-weight="400" >40</text><text x="1292.0" y="981.2" font-size="19.5" fill="#666" text-anchor="end" font-weight="400" >35</text><text x="1292.0" y="1041.8" font-size="19.5" fill="#666" text-anchor="end" font-weight="400" >30</text><text x="1292.0" y="1102.5" font-size="19.5" fill="#666" text-anchor="end" font-weight="400" >25</text><text x="1292.0" y="1163.1" font-size="19.5" fill="#666" text-anchor="end" font-weight="400" >20</text><text x="1325.9" y="1235.0" font-size="21.7" fill="#666" text-anchor="middle" font-weight="400" >01-Jul-19</text><text x="1609.9" y="1235.0" font-size="21.7" fill="#666" text-anchor="middle" font-weight="400" >08-Jul-19</text><text x="1893.9" y="1235.0" font-size="21.7" fill="#666" text-anchor="middle" font-weight="400" >15-Jul-19</text><text x="2177.9" y="1235.0" font-size="21.7" fill="#666" text-anchor="middle" font-weight="400" >22-Jul-19</text><text transform="translate(1252.5,1025.5) rotate(-90)" font-size="20" fill="#777" text-anchor="middle">Zählen</text><polyline points="1325.9,1185.1 1366.5,1181.2 1407.0,1186.3 1447.6,1181.9 1488.2,1181.0 1528.8,1186.9 1569.3,1181.2 1609.9,999.8 1650.5,1181.5 1691.0,859.7 1731.6,1184.5 1772.2,1184.2 1812.7,1184.0 1853.3,1183.8 1893.9,1183.5 1934.5,1183.6 1975.0,1184.2 2015.6,1182.5 2056.2,1182.9 2096.7,1184.9 2137.3,1184.8 2177.9,1184.6 2218.4,1183.7 2259.0,1182.7" fill="none" stroke="#41b6c5" stroke-width="4" stroke-linejoin="miter"/>
</svg>
</body></html>
